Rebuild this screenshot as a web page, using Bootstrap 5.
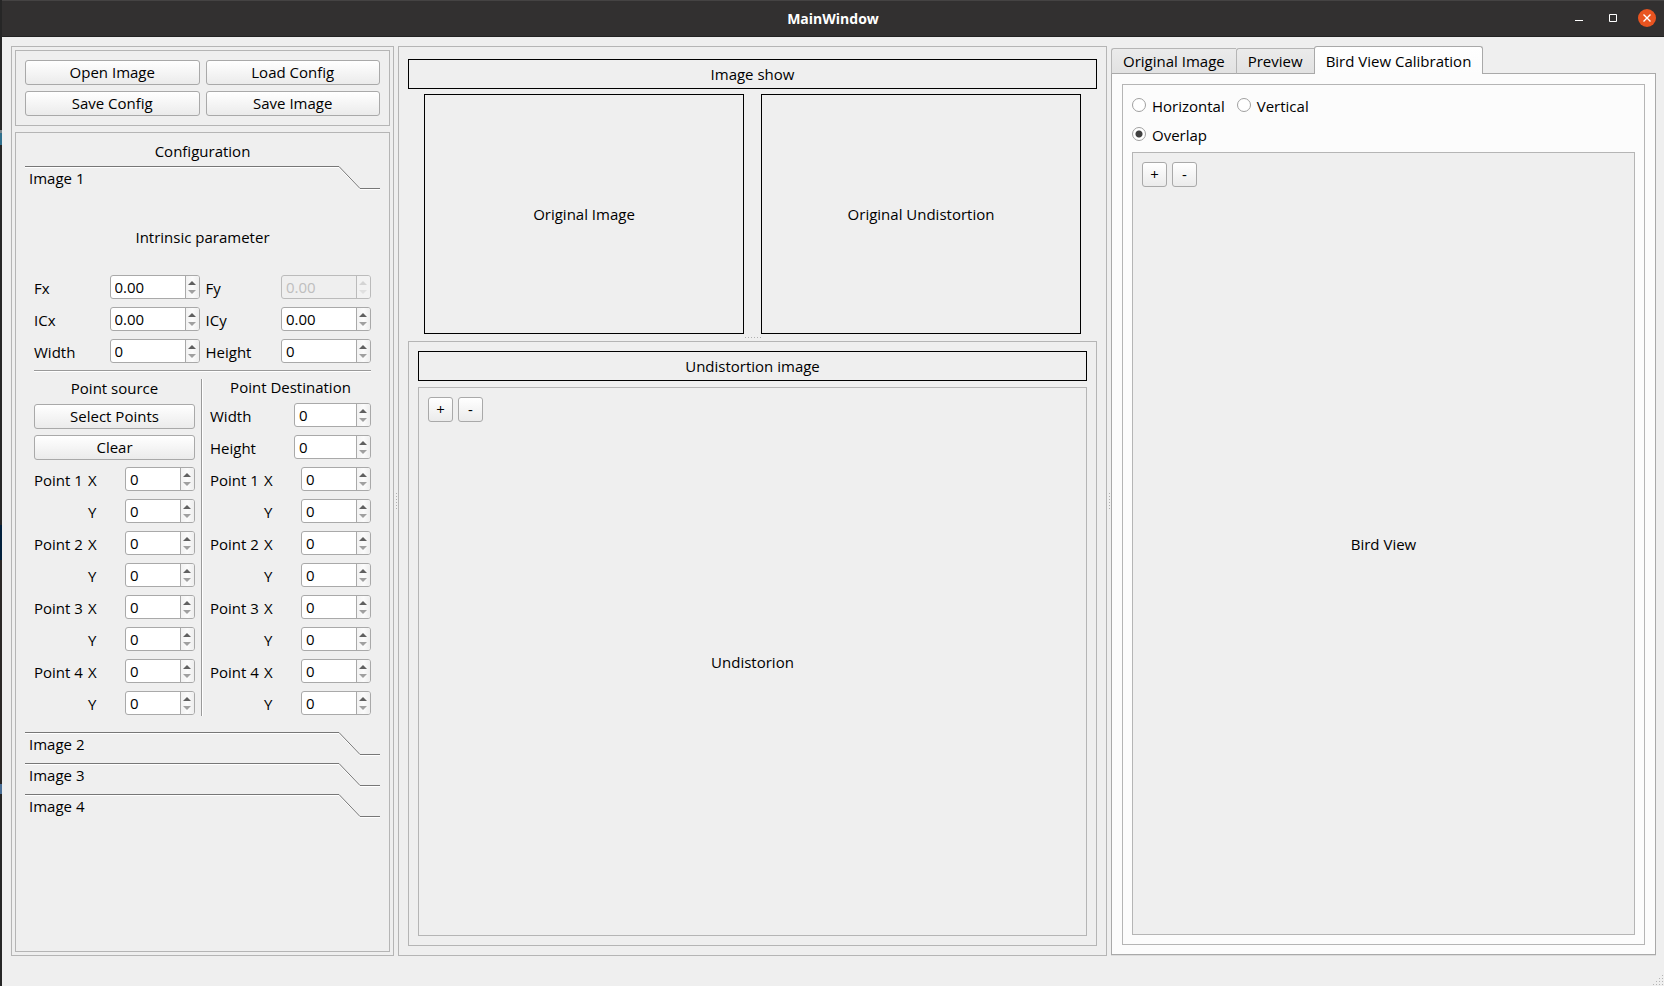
<!DOCTYPE html>
<html lang="en">
<head>
<meta charset="utf-8">
<meta name="viewport" content="width=device-width, initial-scale=1">
<title>MainWindow</title>
<link href="https://cdn.jsdelivr.net/npm/bootstrap@5.3.0/dist/css/bootstrap.min.css" rel="stylesheet">
<style>
  :root { --win: #efefef; --line: #b5b5b5; --edge: #a9a9a9; }
  /* The strip at the left edge is the desktop behind the window */
  body {
    font: 15px/18px "Open Sans", "Noto Sans", sans-serif;
    color: #000; padding-left: 2px;
    background: linear-gradient(#262626 130px, #7b868c 130px 133px, #2f6f8c 133px 145px, #262626 145px 525px, #02203c 525px 560px, #2b2827 560px 784px, #4a6f96 784px 794px, #262626 794px) left / 2px 100% no-repeat var(--win);
  }
  /* Title bar */
  .titlebar { height: 37px; background: #323030; border-top: 1px solid #454343; border-bottom: 1px solid #222; color: #fff; display: grid; grid-template-columns: 1fr auto 1fr; align-items: center; }
  .titlebar h1 { font-size: 14px; line-height: 18px; font-weight: 700; }
  .win-btns { gap: 16px; padding: 0 8px 1px 0; }
  .win-btn { width: 18px; height: 18px; padding: 0; border: 0; background: none; color: #fff; display: block; }
  .win-btn svg { display: block; }
  /* Frames */
  .work { padding: 9px 8px 0 9px; }
  .frame { border: 1px solid var(--line); }
  .frame-black { border: 1px solid #000; display: flex; align-items: center; justify-content: center; }
  .pad { padding: 9px; }
  .gap-6 { gap: 6px; }
  .gap-5px { gap: 5px; }
  .side { flex: 0 0 383px; padding: 3px; }
  .tools { flex: 0 0 545px; padding-bottom: 1px; }
  .center-pane { padding: 12px 9px 9px; }
  .caption { height: 30px; }
  .thumbs { display: grid; grid-template-columns: 1fr 1fr; gap: 17px; padding: 5px 16px 0; }
  .thumbs .frame-black { aspect-ratio: 4 / 3; }
  /* Splitter grips */
  .split-v { flex: 0 0 4px; display: flex; align-items: center; justify-content: center; }
  .split-v i { width: 1px; height: 16px; background: repeating-linear-gradient(#b0b0b0 0 1px, transparent 1px 3px); }
  .split-h { height: 7px; display: flex; align-items: center; justify-content: center; }
  .split-h i { width: 16px; height: 1px; background: repeating-linear-gradient(90deg, #b0b0b0 0 1px, transparent 1px 3px); }
  /* Push buttons */
  .btn-push {
    --bs-btn-color: #000; --bs-btn-hover-color: #000; --bs-btn-active-color: #000;
    --bs-btn-border-color: var(--edge); --bs-btn-hover-border-color: #999; --bs-btn-active-border-color: #888;
    --bs-btn-padding-x: 4px; --bs-btn-padding-y: 0; --bs-btn-font-size: 15px; --bs-btn-line-height: 23px; --bs-btn-border-radius: 3px;
    background: linear-gradient(#fff, #ebebeb); height: 25px;
  }
  .btn-push.sq { width: 25px; padding: 0; }
  .two-col { display: grid; grid-template-columns: 1fr 1fr; gap: 6px; }
  /* Spin boxes */
  .spin { display: flex; height: 24px; width: 90px; border: 1px solid var(--edge); border-radius: 3px; background: #fff; overflow: hidden; }
  .spin input { flex: 1 1 0; min-width: 0; border: 0; padding: 1px 0 0 4px; background: none; color: #000; outline: 0; line-height: 21px; appearance: textfield; -moz-appearance: textfield; }
  .spin input::-webkit-inner-spin-button, .spin input::-webkit-outer-spin-button { -webkit-appearance: none; margin: 0; }
  .spin .steps { flex: 0 0 14px; border-left: 1px solid var(--edge); background: linear-gradient(90deg, #f2f2f2, #fbfbfb 50%, #eee); display: flex; flex-direction: column; }
  .spin .steps button { flex: 1; border: 0; padding: 0 1px 0 0; background: none; display: flex; justify-content: center; align-items: center; }
  .spin .steps button::before { content: ""; border: 0 solid transparent; border-width: 0 4px 4px; border-bottom-color: #606060; }
  .spin .steps button + button::before { border-width: 4px 4px 0; border-top-color: #a0a0a0; }
  .spin .steps button + button { padding-bottom: 2px; }
  .spin .steps button:first-child { padding-top: 2px; }
  .spin.off { background: var(--win); border-color: #bbb; }
  .spin.off input { color: #bebebe; }
  .spin.off .steps { border-color: #bbb; background: #f2f2f2; }
  .spin.off .steps button::before { border-bottom-color: #d4d4d4; }
  .spin.off .steps button + button::before { border-top-color: #e0e0e0; }
  .spin.w-size { width: 77px; }
  .spin.w-point { width: 70px; }
  /* Tool box pages */
  .page-tab { display: flex; width: 100%; height: 25px; border: 0; padding: 0; background: none; color: #000; text-align: left; }
  .page-tab span { flex: 1; height: 24px; border-top: 1px solid #777; box-shadow: inset 0 1px #fff; padding: 2px 4px 0; }
  .page { padding: 9px 9px 10px; }
  .intrinsic { height: 61px; margin-bottom: 8px; }
  .intrinsic-grid { row-gap: 8px; }
  .intrinsic-grid > div { display: flex; justify-content: space-between; align-items: center; }
  .page label, .pt-row > span { padding-top: 1px; }
  .rule-h { height: 3px; margin: 6px 0; border-top: 1px solid transparent; background: linear-gradient(#9a9a9a 50%, #fff 50%); background-clip: padding-box; }
  .points { display: grid; grid-template-columns: 1fr 3px 1fr; column-gap: 6px; }
  .rule-v { background: linear-gradient(90deg, #9a9a9a 1px, #fff 1px 2px, transparent 2px); margin-top: 1px; }
  .head-src { line-height: 20px; }
  .line-row { height: 26px; display: flex; align-items: center; justify-content: space-between; }
  .pt-row { height: 26px; display: grid; grid-template-columns: 54px 1fr 70px; align-items: center; }
  /* Tabs */
  .nav-tabs { --bs-nav-tabs-border-width: 0; height: 28px; align-items: flex-end; position: relative; z-index: 1; margin-bottom: -1px; }
  .nav-tabs .nav-link { color: #000; background: linear-gradient(#ebebeb, #e2e2e2); border: 1px solid var(--line); border-right: 0; height: 26px; line-height: 21px; padding: 0 11px; border-radius: 3px 0 0 0; border-bottom-color: var(--edge); margin: 0; }
  .nav-tabs .nav-link.active { color: #000; background: linear-gradient(#fff, #fcfcfc); border: 1px solid var(--edge); border-bottom: 0; height: 28px; line-height: 26px; border-radius: 3px 3px 0 0; }
  .pane { background: #fcfcfc; border: 1px solid var(--edge); box-shadow: 0 1px #dcdcdc; padding: 10px 10px 9px; }
  .view { background: var(--win); }
  .choice { height: 23px; display: flex; align-items: center; gap: 12px; }
  .choice label { display: flex; align-items: center; gap: 6px; }
  .choice .form-check-input { width: 14px; height: 14px; margin: 0 0 1px; border-color: #a0a0a0; background-color: #fff; }
  .choice .form-check-input:checked { background-image: radial-gradient(circle, #404040 3px, transparent 4px); border-color: #a0a0a0; }
  .statusbar { height: 30px; }
</style>
</head>
<body class="d-flex flex-column min-vh-100">

<header class="titlebar">
  <span></span>
  <h1 class="m-0">MainWindow</h1>
  <div class="win-btns d-flex justify-content-end">
    <button class="win-btn" aria-label="Minimize"><svg width="18" height="18"><path d="M5 11.5h8" stroke="#fff"/></svg></button>
    <button class="win-btn" aria-label="Maximize"><svg width="18" height="18"><path d="M5.5 5.5h7v7h-7z" fill="none" stroke="#fff"/></svg></button>
    <button class="win-btn" aria-label="Close"><svg width="18" height="18"><circle cx="9" cy="9" r="9" fill="#e95420"/><path d="M5.5 5.5l7 7m0-7l-7 7" stroke="#fff" stroke-width="1.4"/></svg></button>
  </div>
</header>

<main class="work d-flex flex-grow-1">

  <!-- Configuration side panel -->
  <section class="side frame d-flex flex-column gap-6">
    <div class="frame pad two-col">
      <button class="btn btn-push">Open Image</button>
      <button class="btn btn-push">Load Config</button>
      <button class="btn btn-push">Save Config</button>
      <button class="btn btn-push">Save Image</button>
    </div>

    <div class="frame pad d-flex flex-column gap-6 flex-grow-1" id="toolbox">
      <div class="text-center">Configuration</div>

      <button class="page-tab" data-bs-toggle="collapse" data-bs-target="#page1" aria-expanded="true"><span>Image 1</span><svg width="41" height="24" fill="none"><path d="M0 1.5L21 23.5H41" stroke="#fff"/><path d="M0 .5L21 22.5H41" stroke="#777"/></svg></button>
      <div class="collapse show" id="page1" data-bs-parent="#toolbox">
        <div class="page">
          <div class="intrinsic d-flex align-items-center justify-content-center">Intrinsic parameter</div>
          <div class="two-col intrinsic-grid">
            <div><label for="fx">Fx</label><div class="spin"><input type="number" id="fx" value="0.00" step="0.01"><div class="steps"><button aria-label="Up"></button><button aria-label="Down"></button></div></div></div>
            <div><label for="fy">Fy</label><div class="spin off"><input type="number" id="fy" value="0.00" step="0.01" disabled><div class="steps"><button aria-label="Up" disabled></button><button aria-label="Down" disabled></button></div></div></div>
            <div><label for="icx">ICx</label><div class="spin"><input type="number" id="icx" value="0.00" step="0.01"><div class="steps"><button aria-label="Up"></button><button aria-label="Down"></button></div></div></div>
            <div><label for="icy">ICy</label><div class="spin"><input type="number" id="icy" value="0.00" step="0.01"><div class="steps"><button aria-label="Up"></button><button aria-label="Down"></button></div></div></div>
            <div><label for="iw">Width</label><div class="spin"><input type="number" id="iw" value="0"><div class="steps"><button aria-label="Up"></button><button aria-label="Down"></button></div></div></div>
            <div><label for="ih">Height</label><div class="spin"><input type="number" id="ih" value="0"><div class="steps"><button aria-label="Up"></button><button aria-label="Down"></button></div></div></div>
          </div>
          <div class="rule-h"></div>
          <div class="points">
            <div class="d-flex flex-column gap-6">
              <div class="head-src text-center">Point source</div>
              <button class="btn btn-push">Select Points</button>
              <button class="btn btn-push">Clear</button>
              <div class="pt-row"><span>Point 1</span><label for="s1x">X</label><div class="spin w-point"><input type="number" id="s1x" value="0"><div class="steps"><button aria-label="Up"></button><button aria-label="Down"></button></div></div></div>
              <div class="pt-row"><span></span><label for="s1y">Y</label><div class="spin w-point"><input type="number" id="s1y" value="0"><div class="steps"><button aria-label="Up"></button><button aria-label="Down"></button></div></div></div>
              <div class="pt-row"><span>Point 2</span><label for="s2x">X</label><div class="spin w-point"><input type="number" id="s2x" value="0"><div class="steps"><button aria-label="Up"></button><button aria-label="Down"></button></div></div></div>
              <div class="pt-row"><span></span><label for="s2y">Y</label><div class="spin w-point"><input type="number" id="s2y" value="0"><div class="steps"><button aria-label="Up"></button><button aria-label="Down"></button></div></div></div>
              <div class="pt-row"><span>Point 3</span><label for="s3x">X</label><div class="spin w-point"><input type="number" id="s3x" value="0"><div class="steps"><button aria-label="Up"></button><button aria-label="Down"></button></div></div></div>
              <div class="pt-row"><span></span><label for="s3y">Y</label><div class="spin w-point"><input type="number" id="s3y" value="0"><div class="steps"><button aria-label="Up"></button><button aria-label="Down"></button></div></div></div>
              <div class="pt-row"><span>Point 4</span><label for="s4x">X</label><div class="spin w-point"><input type="number" id="s4x" value="0"><div class="steps"><button aria-label="Up"></button><button aria-label="Down"></button></div></div></div>
              <div class="pt-row"><span></span><label for="s4y">Y</label><div class="spin w-point"><input type="number" id="s4y" value="0"><div class="steps"><button aria-label="Up"></button><button aria-label="Down"></button></div></div></div>
            </div>
            <div class="rule-v"></div>
            <div class="d-flex flex-column gap-6">
              <div class="text-center">Point Destination</div>
              <div class="line-row"><label for="dw">Width</label><div class="spin w-size"><input type="number" id="dw" value="0"><div class="steps"><button aria-label="Up"></button><button aria-label="Down"></button></div></div></div>
              <div class="line-row"><label for="dh">Height</label><div class="spin w-size"><input type="number" id="dh" value="0"><div class="steps"><button aria-label="Up"></button><button aria-label="Down"></button></div></div></div>
              <div class="pt-row"><span>Point 1</span><label for="d1x">X</label><div class="spin w-point"><input type="number" id="d1x" value="0"><div class="steps"><button aria-label="Up"></button><button aria-label="Down"></button></div></div></div>
              <div class="pt-row"><span></span><label for="d1y">Y</label><div class="spin w-point"><input type="number" id="d1y" value="0"><div class="steps"><button aria-label="Up"></button><button aria-label="Down"></button></div></div></div>
              <div class="pt-row"><span>Point 2</span><label for="d2x">X</label><div class="spin w-point"><input type="number" id="d2x" value="0"><div class="steps"><button aria-label="Up"></button><button aria-label="Down"></button></div></div></div>
              <div class="pt-row"><span></span><label for="d2y">Y</label><div class="spin w-point"><input type="number" id="d2y" value="0"><div class="steps"><button aria-label="Up"></button><button aria-label="Down"></button></div></div></div>
              <div class="pt-row"><span>Point 3</span><label for="d3x">X</label><div class="spin w-point"><input type="number" id="d3x" value="0"><div class="steps"><button aria-label="Up"></button><button aria-label="Down"></button></div></div></div>
              <div class="pt-row"><span></span><label for="d3y">Y</label><div class="spin w-point"><input type="number" id="d3y" value="0"><div class="steps"><button aria-label="Up"></button><button aria-label="Down"></button></div></div></div>
              <div class="pt-row"><span>Point 4</span><label for="d4x">X</label><div class="spin w-point"><input type="number" id="d4x" value="0"><div class="steps"><button aria-label="Up"></button><button aria-label="Down"></button></div></div></div>
              <div class="pt-row"><span></span><label for="d4y">Y</label><div class="spin w-point"><input type="number" id="d4y" value="0"><div class="steps"><button aria-label="Up"></button><button aria-label="Down"></button></div></div></div>
            </div>
          </div>
        </div>
      </div>
      <button class="page-tab"><span>Image 2</span><svg width="41" height="24" fill="none"><path d="M0 1.5L21 23.5H41" stroke="#fff"/><path d="M0 .5L21 22.5H41" stroke="#777"/></svg></button>
      <button class="page-tab"><span>Image 3</span><svg width="41" height="24" fill="none"><path d="M0 1.5L21 23.5H41" stroke="#fff"/><path d="M0 .5L21 22.5H41" stroke="#777"/></svg></button>
      <button class="page-tab"><span>Image 4</span><svg width="41" height="24" fill="none"><path d="M0 1.5L21 23.5H41" stroke="#fff"/><path d="M0 .5L21 22.5H41" stroke="#777"/></svg></button>
    </div>
  </section>

  <div class="split-v"><i></i></div>

  <!-- Image panels -->
  <section class="center-pane frame flex-grow-1 d-flex flex-column">
    <div class="caption frame-black">Image show</div>
    <div class="thumbs">
      <div class="frame-black">Original Image</div>
      <div class="frame-black">Original Undistortion</div>
    </div>
    <div class="split-h"><i></i></div>
    <div class="frame pad flex-grow-1 d-flex flex-column gap-6">
      <div class="caption frame-black">Undistortion image</div>
      <div class="frame pad flex-grow-1 d-flex flex-column">
        <div class="d-flex gap-5px"><button class="btn btn-push sq">+</button><button class="btn btn-push sq">-</button></div>
        <div class="flex-grow-1 d-flex align-items-center justify-content-center pb-4">Undistorion</div>
      </div>
    </div>
  </section>

  <div class="split-v"><i></i></div>

  <!-- Calibration tabs -->
  <section class="tools d-flex flex-column">
    <ul class="nav nav-tabs" role="tablist">
      <li class="nav-item"><button class="nav-link" role="tab">Original Image</button></li>
      <li class="nav-item"><button class="nav-link" role="tab">Preview</button></li>
      <li class="nav-item"><button class="nav-link active" role="tab" aria-selected="true">Bird View Calibration</button></li>
    </ul>
    <div class="pane flex-grow-1 d-flex flex-column">
      <div class="frame pad flex-grow-1 d-flex flex-column gap-6">
        <div class="choice">
          <label><input class="form-check-input" type="radio" name="mode">Horizontal</label>
          <label><input class="form-check-input" type="radio" name="mode">Vertical</label>
        </div>
        <div class="choice">
          <label><input class="form-check-input" type="radio" name="mode" checked>Overlap</label>
        </div>
        <div class="view frame pad flex-grow-1 d-flex flex-column">
          <div class="d-flex gap-5px"><button class="btn btn-push sq">+</button><button class="btn btn-push sq">-</button></div>
          <div class="flex-grow-1 d-flex align-items-center justify-content-center pb-4">Bird View</div>
        </div>
      </div>
    </div>
  </section>
</main>

<footer class="statusbar d-flex justify-content-end align-items-end">
  <svg width="12" height="12" fill="#b5b5b5"><path d="M10 1h1v1h-1zM7 4h1v1h-1zM10 4h1v1h-1zM4 7h1v1h-1zM7 7h1v1h-1zM10 7h1v1h-1zM1 10h1v1h-1zM4 10h1v1h-1zM7 10h1v1h-1zM10 10h1v1h-1z"/></svg>
</footer>

<script src="https://cdn.jsdelivr.net/npm/bootstrap@5.3.0/dist/js/bootstrap.bundle.min.js"></script>
<script>
  // Step buttons change the number beside them
  document.querySelectorAll('.steps').forEach(function (s) {
    var field = s.previousElementSibling;
    s.children[0].onclick = function () { field.stepUp(); };
    s.children[1].onclick = function () { field.stepDown(); };
  });
</script>
</body>
</html>
